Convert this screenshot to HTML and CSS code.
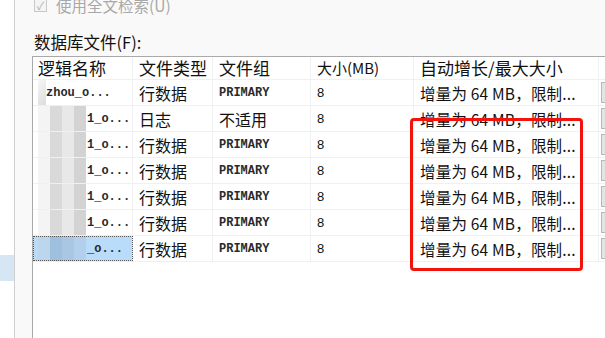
FILE: index.html
```html
<!DOCTYPE html>
<html lang="zh-CN">
<head>
  <meta charset="UTF-8">
  <title>数据库属性 - 文件</title>
  <link rel="stylesheet" href="styles.css">
</head>
<body>
  <div class="window">
    <div class="nav">
      <div class="nav-item"></div>
      <div class="nav-item selected"></div>
    </div>

    <div class="content">
      <label class="check disabled"><span class="box">✓</span>使用全文检索(U)</label>
      <div class="label">数据库文件(F):</div>

      <div class="grid">
        <div class="row head">
          <div class="cell c1">逻辑名称</div>
          <div class="cell c2">文件类型</div>
          <div class="cell c3">文件组</div>
          <div class="cell c4">大小(MB)</div>
          <div class="cell c5">自动增长/最大大小</div>
          <div class="cell c6"></div>
        </div>

        <div class="row">
          <div class="cell c1"><span class="mosaic short"></span><span class="name">zhou_o...</span></div>
          <div class="cell c2">行数据</div>
          <div class="cell c3 mono">PRIMARY</div>
          <div class="cell c4">8</div>
          <div class="cell c5 grow">增量为 64 MB，限制...</div>
          <div class="cell c6"><span class="btn"></span></div>
        </div>
        <div class="row">
          <div class="cell c1"><span class="mosaic"></span><span class="name">1_o...</span></div>
          <div class="cell c2">日志</div>
          <div class="cell c3">不适用</div>
          <div class="cell c4">8</div>
          <div class="cell c5 grow">增量为 64 MB，限制...</div>
          <div class="cell c6"><span class="btn"></span></div>
        </div>
        <div class="row">
          <div class="cell c1"><span class="mosaic"></span><span class="name">1_o...</span></div>
          <div class="cell c2">行数据</div>
          <div class="cell c3 mono">PRIMARY</div>
          <div class="cell c4">8</div>
          <div class="cell c5 grow">增量为 64 MB，限制...</div>
          <div class="cell c6"><span class="btn"></span></div>
        </div>
        <div class="row">
          <div class="cell c1"><span class="mosaic"></span><span class="name">1_o...</span></div>
          <div class="cell c2">行数据</div>
          <div class="cell c3 mono">PRIMARY</div>
          <div class="cell c4">8</div>
          <div class="cell c5 grow">增量为 64 MB，限制...</div>
          <div class="cell c6"><span class="btn"></span></div>
        </div>
        <div class="row">
          <div class="cell c1"><span class="mosaic"></span><span class="name">1_o...</span></div>
          <div class="cell c2">行数据</div>
          <div class="cell c3 mono">PRIMARY</div>
          <div class="cell c4">8</div>
          <div class="cell c5 grow">增量为 64 MB，限制...</div>
          <div class="cell c6"><span class="btn"></span></div>
        </div>
        <div class="row">
          <div class="cell c1"><span class="mosaic"></span><span class="name">1_o...</span></div>
          <div class="cell c2">行数据</div>
          <div class="cell c3 mono">PRIMARY</div>
          <div class="cell c4">8</div>
          <div class="cell c5 grow">增量为 64 MB，限制...</div>
          <div class="cell c6"><span class="btn"></span></div>
        </div>
        <div class="row">
          <div class="cell c1 focus"><span class="mosaic blue"></span><span class="name">_o...</span></div>
          <div class="cell c2">行数据</div>
          <div class="cell c3 mono">PRIMARY</div>
          <div class="cell c4">8</div>
          <div class="cell c5 grow">增量为 64 MB，限制...</div>
          <div class="cell c6"><span class="btn"></span></div>
        </div>

        <!-- annotation -->
        <div class="highlight"></div>
      </div>
    </div>
  </div>
</body>
</html>
```

FILE: styles.css
```css
html, body {
  margin: 0;
  height: 100%;
  overflow: hidden;
}
body {
  background-color: #faf9fa;
  font-family: "Noto Sans CJK SC", "Liberation Sans", sans-serif;
  font-size: 16px;
  color: #111;
}
.window {
  display: flex;
  height: 338px;
}
.nav {
  width: 14px;
  flex: none;
  border-right: 1px solid #cfcfcf;
  background-color: #fff;
  padding-top: 255px;
}
.nav-item {
  height: 0;
}
.nav-item.selected {
  height: 26px;
  background-color: #d6e6f5;
}
.content {
  flex: 1;
  display: flex;
  flex-direction: column;
  padding-left: 17px;
  min-width: 0;
  overflow: hidden;
}
.check {
  display: flex;
  align-items: center;
  flex: none;
  height: 20px;
  margin-top: -5px;
  margin-left: 2px;
  font-size: 15.5px;
}
.check.disabled {
  color: #a8a8a8;
}
.check .box {
  width: 11px;
  height: 11px;
  border: 1px solid #c8c8c8;
  background-color: #f4f4f4;
  font-size: 11px;
  line-height: 11px;
  text-align: center;
  color: #b0b0b0;
  margin-right: 9px;
}
.label {
  flex: none;
  margin-top: 17px;
  margin-left: 2px;
  height: 24px;
  font-size: 16.5px;
  line-height: 20px;
  color: #111;
}
.grid {
  position: relative;
  flex: 1;
  background-color: #fff;
  border-left: 1px solid #a9a9a9;
  border-top: 1px solid #a9a9a9;
  width: 620px;
}
.row {
  display: flex;
  height: 26px;
  border-bottom: 1px solid #f0f0f0;
  box-sizing: border-box;
}
.row.head {
  height: 23px;
}
.cell {
  flex: none;
  box-sizing: border-box;
  border-right: 1px solid #f0f0f0;
  padding-left: 6px;
  line-height: 24px;
  white-space: nowrap;
  overflow: hidden;
  display: flex;
  align-items: center;
}
.head .cell {
  font-size: 17px;
  line-height: 22px;
}
.head .c1 { padding-left: 5px; }
.c1 { width: 100px; }
.c2 { width: 80px; }
.c3 { width: 98px; }
.c4 { width: 103px; }
.c5 { width: 185px; }
.c6 { width: 40px; border-right: none; padding-left: 2px; }
.mono {
  font-family: "Liberation Mono", monospace;
  font-size: 12px;
  font-weight: bold;
  color: #2a2a2a;
  transform: scaleY(1.1);
}
.grow {
  font-family: "Noto Sans CJK SC", "Liberation Mono", monospace;
  font-size: 15.5px;
  letter-spacing: 0.2px;
}
.c4 {
  font-family: "Liberation Sans", sans-serif;
  font-size: 13px;
}
.head .c4 {
  font-family: "Noto Sans CJK SC", sans-serif;
  font-size: 15px;
}
.name {
  font-family: "Liberation Mono", monospace;
  font-size: 12px;
  font-weight: bold;
  color: #2a2a2a;
}
.mosaic {
  width: 48px;
  height: 25px;
  flex: none;
  margin-left: -1px;
  margin-right: 1px;
  background:
    linear-gradient(90deg, #f4f4f4 0 12px, #d9d9d9 12px 24px, #e8e8e8 24px 36px, #d3d3d3 36px);
}
.mosaic.short {
  width: 8px;
  margin-right: 0;
  background: linear-gradient(135deg, #f6f6f6, #dcdcdc);
}
.mosaic.blue {
  background:
    linear-gradient(90deg, #bcd6ee 0 12px, #9fbfdf 12px 24px, #a9c6e4 24px 36px, #b2d0ec 36px);
}
.focus {
  background-color: #b9dcfb;
  outline: 1px dotted #555;
  outline-offset: -1px;
}
.btn {
  display: block;
  width: 22px;
  height: 21px;
  border: 1px solid #b8b8b8;
  background-color: #e4e4e4;
  box-sizing: border-box;
}
.highlight {
  position: absolute;
  left: 377px;
  top: 61px;
  width: 173px;
  height: 153px;
  border: 3px solid #f2140c;
  border-radius: 4px;
  box-sizing: border-box;
}
```
